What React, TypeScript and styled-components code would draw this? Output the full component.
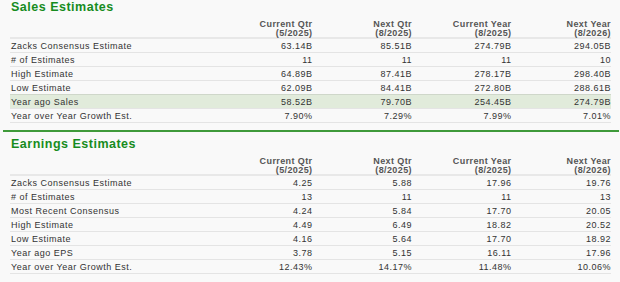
import * as React from 'react';
import styled, { createGlobalStyle } from 'styled-components';

type Row = { label: string; values: string[]; highlight?: boolean };

const columns = [
  ['Current Qtr', '(5/2025)'],
  ['Next Qtr', '(8/2025)'],
  ['Current Year', '(8/2025)'],
  ['Next Year', '(8/2026)'],
];

const salesRows: Row[] = [
  { label: 'Zacks Consensus Estimate', values: ['63.14B', '85.51B', '274.79B', '294.05B'] },
  { label: '# of Estimates', values: ['11', '11', '11', '10'] },
  { label: 'High Estimate', values: ['64.89B', '87.41B', '278.17B', '298.40B'] },
  { label: 'Low Estimate', values: ['62.09B', '84.41B', '272.80B', '288.61B'] },
  { label: 'Year ago Sales', values: ['58.52B', '79.70B', '254.45B', '274.79B'], highlight: true },
  { label: 'Year over Year Growth Est.', values: ['7.90%', '7.29%', '7.99%', '7.01%'] },
];

const earningsRows: Row[] = [
  { label: 'Zacks Consensus Estimate', values: ['4.25', '5.88', '17.96', '19.76'] },
  { label: '# of Estimates', values: ['13', '11', '11', '13'] },
  { label: 'Most Recent Consensus', values: ['4.24', '5.84', '17.70', '20.05'] },
  { label: 'High Estimate', values: ['4.49', '6.49', '18.82', '20.52'] },
  { label: 'Low Estimate', values: ['4.16', '5.64', '17.70', '18.92'] },
  { label: 'Year ago EPS', values: ['3.78', '5.15', '16.11', '17.96'] },
  { label: 'Year over Year Growth Est.', values: ['12.43%', '14.17%', '11.48%', '10.06%'] },
];

const EstimateTable = ({ rows }: { rows: Row[] }) => (
  <Table>
    <HeaderRow>
      <span />
      {columns.map(([name, period]) => (
        <HeadCell key={name}>
          {name}
          <br />
          {period}
        </HeadCell>
      ))}
    </HeaderRow>
    {rows.map((row) => (
      <BodyRow key={row.label} $highlight={row.highlight}>
        <LabelCell>{row.label}</LabelCell>
        {row.values.map((v, i) => (
          <ValueCell key={i}>{v}</ValueCell>
        ))}
      </BodyRow>
    ))}
  </Table>
);

const App = () => {
  return (
    <>
      <GlobalStyle />
      <Page>
        <Section>
          <Title>Sales Estimates</Title>
          <EstimateTable rows={salesRows} />
        </Section>
        <EarningsSection>
          <Title>Earnings Estimates</Title>
          <EstimateTable rows={earningsRows} />
        </EarningsSection>
      </Page>
    </>
  );
};

export default App;

const GlobalStyle = createGlobalStyle`
  body {
    margin: 0;
    background: #f9f9f9;
    font-family: "Liberation Sans", Arial, sans-serif;
    color: #333;
  }
`;

const Page = styled.div`
  width: 620px;
  height: 282px;
  overflow: hidden;
`;

const Section = styled.section`
  padding: 0 9px 0 10px;
`;

const EarningsSection = styled.section`
  margin: 7px 1px 0 3px;
  padding: 5px 8px 0 7px;
  border-top: 2px solid #3f9a3a;
`;

const Title = styled.h2`
  margin: 0 0 0 1px;
  font-size: 12.5px;
  line-height: 15px;
  font-weight: bold;
  letter-spacing: 0.5px;
  color: #178c1e;
`;

const Table = styled.div`
  display: flex;
  flex-direction: column;
`;

const gridCols = `
  display: grid;
  grid-template-columns: 1fr repeat(4, 99.5px);
`;

const HeaderRow = styled.div`
  ${gridCols}
  padding-top: 5px;
  border-bottom: 2px solid #e8e8e8;
`;

const HeadCell = styled.div`
  text-align: right;
  font-size: 9px;
  line-height: 8.5px;
  font-weight: bold;
  letter-spacing: 0.4px;
  color: #555;
`;

const BodyRow = styled.div<{ $highlight?: boolean }>`
  ${gridCols}
  height: 13px;
  align-items: center;
  border-bottom: 1px solid #e4e4e4;
  background: ${(p) => (p.$highlight ? '#e1ebdb' : 'transparent')};
  ${(p) => (p.$highlight ? 'box-shadow: 0 -1px 0 #cfd7ca;' : '')}
  font-size: 9px;
  letter-spacing: 0.5px;
`;

const LabelCell = styled.div`
  padding-left: 1px;
  white-space: nowrap;
`;

const ValueCell = styled.div`
  text-align: right;
`;
